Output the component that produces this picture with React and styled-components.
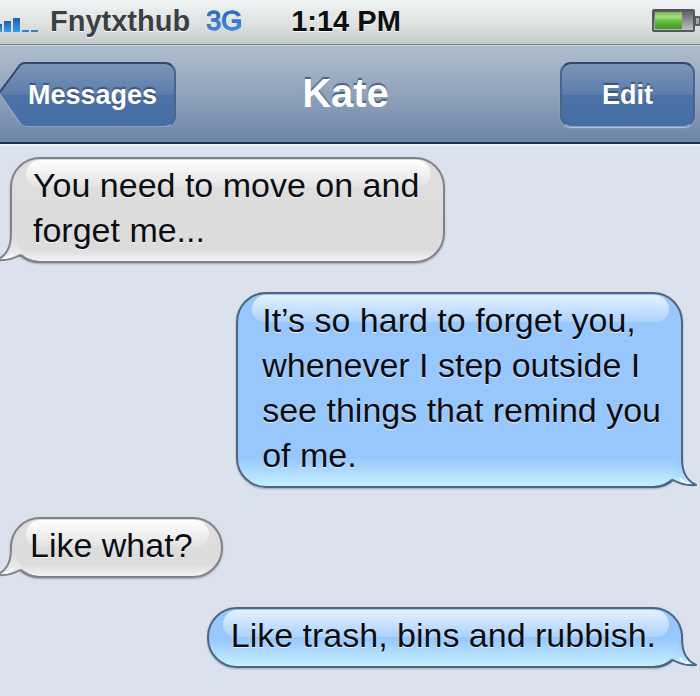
import React from "react";
import { styled, createGlobalStyle } from "styled-components";

const messages = [
    { id: 1, mine: false, text: "You need to move on and\nforget me..." },
    { id: 2, mine: true, text: "It’s so hard to forget you,\nwhenever I step outside I\nsee things that remind you\nof me." },
    { id: 3, mine: false, text: "Like what?" },
    { id: 4, mine: true, text: "Like trash, bins and rubbish." },
];

function Signal() {
    return (
        <svg width="38" height="22" viewBox="0 0 38 22" aria-hidden="true">
            <defs>
                <linearGradient id="signal" x1="0" y1="0" x2="0" y2="1">
                    <stop offset="0" stopColor="#1d5fae" />
                    <stop offset="1" stopColor="#3f9be6" />
                </linearGradient>
            </defs>
            <g fill="url(#signal)">
                <rect x="0" y="14" width="2" height="8" />
                <rect x="4" y="11" width="7" height="11" />
                <rect x="13" y="8" width="7" height="14" />
            </g>
            <g fill="#3c7fc4">
                <rect x="22" y="20" width="7" height="2" />
                <rect x="31" y="20" width="7" height="2" />
            </g>
        </svg>
    );
}

function Battery() {
    return (
        <svg width="48" height="24" viewBox="0 0 48 24" aria-hidden="true">
            <defs>
                <linearGradient id="charge" x1="0" y1="0" x2="0" y2="1">
                    <stop offset="0" stopColor="#79b957" />
                    <stop offset="0.3" stopColor="#a6e07c" />
                    <stop offset="0.5" stopColor="#6cc140" />
                    <stop offset="1" stopColor="#3f9626" />
                </linearGradient>
                <linearGradient id="drained" x1="0" y1="0" x2="0" y2="1">
                    <stop offset="0" stopColor="#57575b" />
                    <stop offset="1" stopColor="#c6c5c8" />
                </linearGradient>
            </defs>
            <rect x="1" y="1" width="41" height="21" rx="1" fill="url(#drained)" stroke="#55585b" strokeWidth="2" />
            <rect x="3" y="3" width="27" height="17" fill="url(#charge)" />
            <path d="M43 8h3q2 0 2 2v4q0 2-2 2h-3z" fill="#a6a8aa" stroke="#55585b" strokeWidth="2" />
        </svg>
    );
}

function BackArrow() {
    return (
        <svg width="25" height="65" viewBox="0 0 25 65" aria-hidden="true">
            <defs>
                <linearGradient id="arrow" gradientUnits="userSpaceOnUse" x1="0" y1="2" x2="0" y2="64">
                    <stop offset="0" stopColor="#7c95b8" />
                    <stop offset="0.5" stopColor="#5b7cab" />
                    <stop offset="0.5" stopColor="#4d72a7" />
                    <stop offset="1" stopColor="#456ea6" />
                </linearGradient>
            </defs>
            <path d="M25 0Q22 0 20 3L-1 31L20 61Q22 65 25 65z" fill="url(#arrow)" />
            <path d="M25 1Q22 1 20 3L0 30" fill="none" stroke="#34496d" strokeWidth="2" />
            <path d="M0 32L20 61Q22 64 25 64" fill="none" stroke="#a3b5cf" strokeWidth="1" />
        </svg>
    );
}

function Tail({ mine }) {
    const id = mine ? "tail-blue" : "tail-grey";
    return (
        <TailSvg $mine={mine} width="42" height="34" viewBox="0 0 42 34" aria-hidden="true">
            <defs>
                <linearGradient id={id} gradientUnits="userSpaceOnUse" x1="0" y1="8" x2="0" y2="32">
                    <stop offset="0" stopColor={mine ? "#97c7fc" : "#dcdcdc"} />
                    <stop offset="1" stopColor={mine ? "#c6f0fe" : "#efefef"} />
                </linearGradient>
            </defs>
            <path d="M12 0V4C13 18 9 26-1 31Q12 32 22 26L26 24Q16 16 16 0z" fill={`url(#${id})`} />
            <path
                d="M13 0V4C13 18 9 26-1 31Q12 32 22 26A29 29 0 0 0 42 33"
                fill="none"
                stroke={mine ? "#4d6580" : "#808285"}
                strokeWidth="2"
                strokeLinejoin="round"
            />
            <path d="M6 29Q12 29 15 24" fill="none" stroke="#fff" strokeOpacity="0.8" strokeWidth="2" />
        </TailSvg>
    );
}

export default function App() {
    return (
        <Phone>
            <GlobalStyle />
            <StatusBar>
                <Carrier>
                    <Signal />
                    <span>Fnytxthub</span>
                    <Network>3G</Network>
                </Carrier>
                <Clock>1:14 PM</Clock>
                <Battery />
            </StatusBar>
            <NavBar>
                <BackButton type="button">
                    <BackArrow />
                    <BackLabel>Messages</BackLabel>
                </BackButton>
                <Title>Kate</Title>
                <EditButton type="button">Edit</EditButton>
            </NavBar>
            <Chat>
                {messages.map(({ id, mine, text }) => (
                    <Bubble key={id} $mine={mine} $multi={text.includes("\n")}>
                        <Tail mine={mine} />
                        <BubbleText>{text}</BubbleText>
                    </Bubble>
                ))}
            </Chat>
        </Phone>
    );
}

const GlobalStyle = createGlobalStyle`
* {
    box-sizing: border-box;
}
body {
    margin: 0;
    background: #dce2ed;
    font-family: "Liberation Sans", Arial, Helvetica, sans-serif;
}
svg {
    display: block;
    flex: none;
}
`;

const Phone = styled.div`
min-height: 100vh;
overflow-x: hidden;
background: #dce2ed;
`;

const StatusBar = styled.header`
display: grid;
grid-template-columns: 1fr auto 1fr;
align-items: center;
padding: 4px 0 6px;
border-bottom: 1px solid #75828d;
background: linear-gradient(#eff4f5, #dcdfe0 60%, #c6c9ca);
font-size: 29px;
line-height: 34px;
font-weight: 700;
color: #3a4142;
text-shadow: 0 1px 1px #fff;

> svg {
    justify-self: end;
}
`;

const Carrier = styled.div`
display: flex;
align-items: center;
gap: 12px;
`;

const Network = styled.span`
margin-left: 4px;
font-size: 27px;
font-weight: 400;
color: transparent;
text-shadow: none;
background: linear-gradient(#2a62c2 30%, #4aa0ea 80%);
background-clip: text;
-webkit-text-stroke: 1px #3a78cc;
`;

const Clock = styled.time`
padding-right: 8px;
color: #0c0e0f;
`;

const NavBar = styled.nav`
display: grid;
grid-template-columns: 1fr auto 1fr;
align-items: center;
padding: 16px 5px 15px 0;
border-top: 1px solid #ccd6e0;
border-bottom: 2px solid #1d2c47;
background: linear-gradient(#b0bfce, #8fa3bc 50%, #6d85a8);
box-shadow: 0 2px 1px #eaf1f8;
`;

const Button = styled.button`
height: 65px;
padding: 0;
border: 0;
background: none;
color: #fff;
font: 700 27px/62px "Liberation Sans", Arial, Helvetica, sans-serif;
text-shadow: 0 -2px 1px #3b5375;
`;

const face = `
border: 2px solid #4b648b;
border-top-color: #34496d;
border-bottom-width: 1px;
border-bottom-color: #8ba2c3;
background: linear-gradient(#7c95b8, #5b7cab 50%, #4d72a7 50%, #456ea6);
`;

const BackButton = styled(Button)`
display: flex;
justify-self: start;
`;

const BackLabel = styled.span`
height: 65px;
padding: 0 17px 0 3px;
${face}
border-left: 0;
border-radius: 0 11px 11px 0;
`;

const Title = styled.h1`
margin: 0;
padding: 0 4px 4px 0;
font-size: 40px;
line-height: 46px;
font-weight: 700;
color: #fff;
text-shadow: 0 -2px 1px #4f5f75;
`;

const EditButton = styled(Button)`
justify-self: end;
width: 135px;
padding-bottom: 2px;
${face}
border-radius: 11px;
box-shadow: 0 1px 1px #b7c6db;
`;

const Chat = styled.main`
display: flex;
flex-direction: column;
align-items: flex-start;
gap: 29px;
padding: 13px 17px 24px 10px;
`;

const bubblePadding = ({ $mine, $multi }) => {
    if ($mine) return $multi ? "4px 20px 8px 24px" : "4px 25px 8px 22px";
    return $multi ? "4px 24px 8px 21px" : "4px 28px 8px 18px";
};

const Bubble = styled.div`
position: relative;
align-self: ${({ $mine }) => ($mine ? "flex-end" : "flex-start")};
padding: ${bubblePadding};
border: 2px solid ${({ $mine }) => ($mine ? "#4d6580" : "#808285")};
border-radius: 30px;
background: ${({ $mine }) =>
    $mine
        ? "linear-gradient(to top, #c6f0fe, #97c7fc 28px, #97c7fc)"
        : "linear-gradient(to top, #f2f2f2, #dcdcdc 12px, #dedede)"};
box-shadow: 0 1px 2px rgba(60, 70, 90, 0.4);

/* glossy strip along the top edge */
&::before {
    content: "";
    position: absolute;
    top: 1px;
    left: 14px;
    right: 12px;
    height: 27px;
    border-radius: 16px 16px 14px 14px;
    background: ${({ $mine }) =>
        $mine
            ? "linear-gradient(rgba(255, 255, 255, 0.75), rgba(255, 255, 255, 0.2))"
            : "linear-gradient(#fff, rgba(255, 255, 255, 0.15))"};
}
`;

const TailSvg = styled.svg`
position: absolute;
bottom: -2px;
overflow: visible;
${({ $mine }) => ($mine ? "right: -14px; transform: scaleX(-1);" : "left: -14px;")}
`;

const BubbleText = styled.p`
position: relative;
margin: 0;
font-size: 34px;
line-height: 45px;
color: #0b0d12;
text-shadow: 0 1px 1px rgba(255, 255, 255, 0.7);
white-space: pre-line;
`;
